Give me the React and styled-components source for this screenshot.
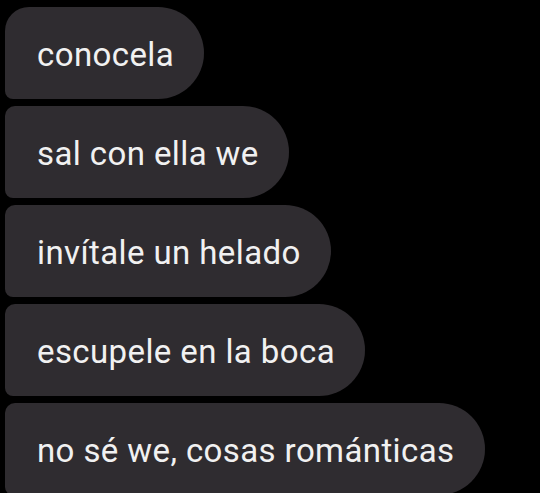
import React from 'react';
import styled, { createGlobalStyle } from 'styled-components';

const messages = [
  'conocela',
  'sal con ella we',
  'invítale un helado',
  'escupele en la boca',
  'no sé we, cosas románticas',
];

export default function App() {
  return (
    <>
      <GlobalStyle />
      <Thread>
        {messages.map((text, i) => (
          <Bubble key={i} $first={i === 0}>
            {text}
          </Bubble>
        ))}
      </Thread>
    </>
  );
}

const GlobalStyle = createGlobalStyle`
  html, body {
    margin: 0;
    background: #000;
  }
  body {
    width: 540px;
    height: 493px;
    overflow: hidden;
  }
`;

const Thread = styled.div`
  display: flex;
  flex-direction: column;
  align-items: flex-start;
  gap: 7px;
  padding: 7px 0 0 5px;
`;

const Bubble = styled.div`
  display: flex;
  align-items: center;
  flex-shrink: 0;
  box-sizing: border-box;
  height: 92px;
  padding: 2px 30px 0 32px;
  background: #2f2c30;
  color: #f1f1f1;
  font-family: Roboto, 'Noto Sans', sans-serif;
  font-size: 33px;
  letter-spacing: 0.4px;
  white-space: nowrap;
  border-radius: ${p => (p.$first ? '24px' : '10px')} 46px 46px 8px;
`;
